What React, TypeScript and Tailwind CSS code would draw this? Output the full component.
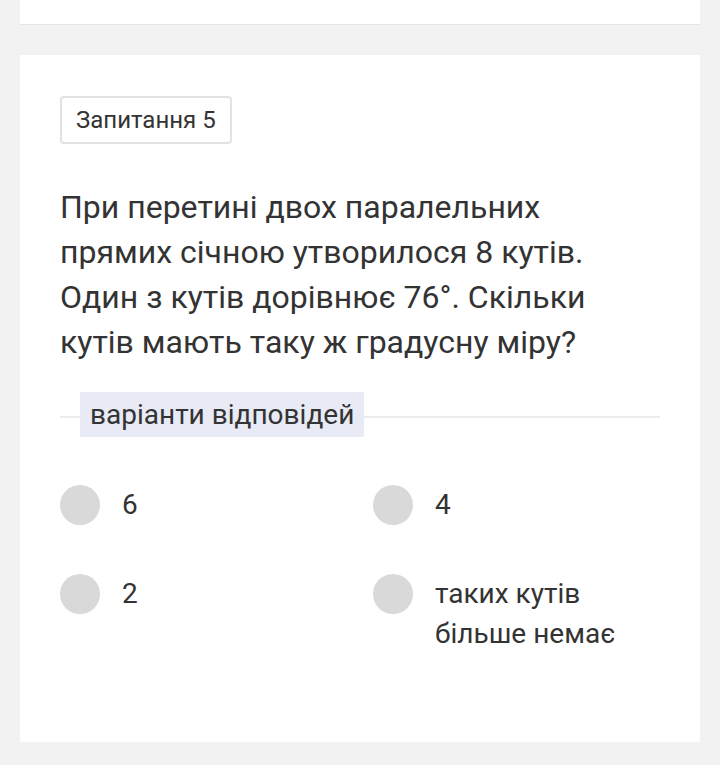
const options = ['6', '4', '2', 'таких кутів більше немає'];

export default function App() {
  return (
    <div className="min-h-[765px] bg-[#f2f2f2] px-[20px] font-['Roboto',sans-serif] text-[#333]">
      {/* previous card */}
      <div className="h-[25px] bg-white border-b border-[#e6e6e6]" />

      {/* question card */}
      <div className="mt-[30px] h-[687px] bg-white px-[40px] pt-[41px]">
        <div className="inline-flex h-[48px] items-center rounded-[4px] border-2 border-[#e2e2e2] px-[14px] text-[24px]">
          Запитання 5
        </div>

        <p className="mt-[41px] max-w-[560px] text-[32px] leading-[45px]">
          При перетині двох паралельних прямих січною утворилося 8 кутів. Один з кутів дорівнює 76°. Скільки кутів мають таку ж градусну міру?
        </p>

        {/* answers divider */}
        <div className="relative mt-[27px] flex h-[45px] items-center">
          <div className="absolute inset-x-0 top-[24px] h-[2px] bg-[#ececec]" />
          <span className="relative ml-[20px] flex h-[45px] items-center bg-[#e8eaf6] px-[10px] text-[28px]">
            варіанти відповідей
          </span>
        </div>

        <div className="mt-[48px] grid grid-cols-[313px_1fr] gap-y-[49px]">
          {options.map((o) => (
            <div key={o} className="flex items-start gap-[22px]">
              <div className="h-[40px] w-[40px] shrink-0 rounded-full bg-[#d9d9d9]" />
              <span className="text-[28px] leading-[40px]">{o}</span>
            </div>
          ))}
        </div>
      </div>
    </div>
  );
}
